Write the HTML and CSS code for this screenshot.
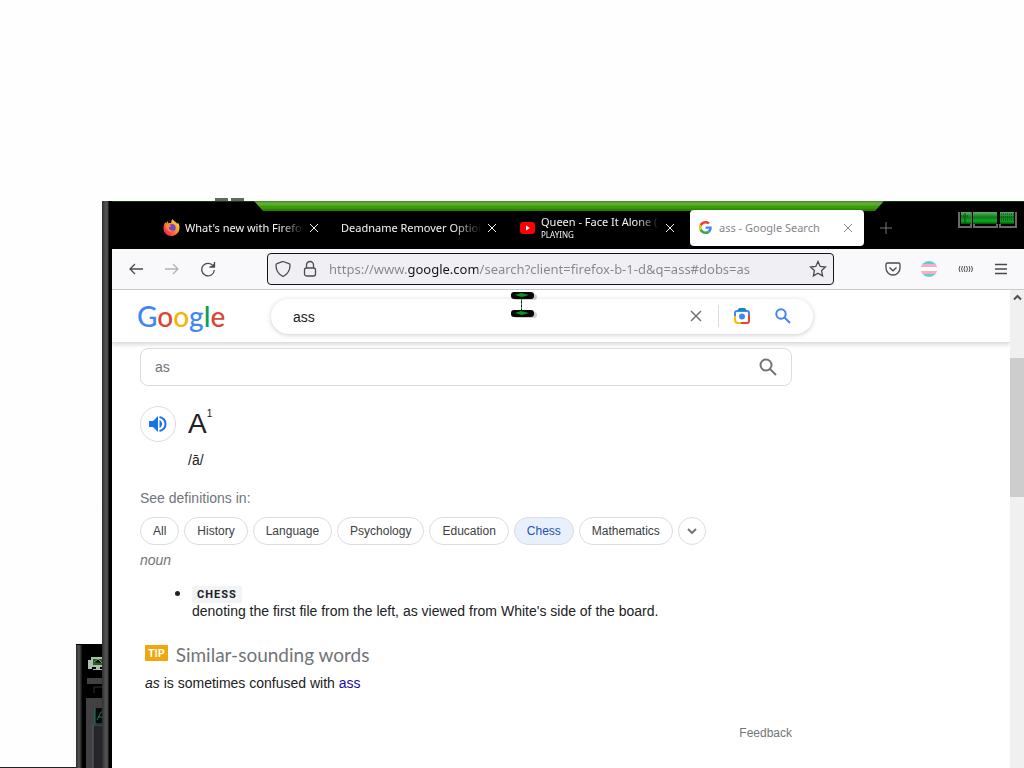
FILE: index.html
```html
<!DOCTYPE html>
<html lang="en">
<head>
<meta charset="utf-8">
<title>ass - Google Search</title>
<link rel="stylesheet" href="styles.css">
</head>
<body>
<div class="desktop">
  <div class="rear-window" aria-hidden="true">
    <svg width="26" height="125" viewBox="0 0 26 125">
      <defs><linearGradient id="edge"><stop offset="0" stop-color="#2c2c2c"/><stop offset=".5" stop-color="#555"/><stop offset="1" stop-color="#111"/></linearGradient></defs>
      <path fill="#000" d="M0 1h26v124H0z"/>
      <path fill="url(#edge)" d="M0 2h6v123H0z"/>
      <path fill="#a9bdb0" d="M12 17h4v9h-4zM15 14h11v10H15zM20 24h4v2h-4zM17 26h9v1h-9z"/>
      <path fill="#285c1b" d="M17 16h9v6h-9z"/><path stroke="#72a454" d="M18 19l4-3 4 4"/>
      <path fill="#414143" d="M11 35h15v6H11zM10 55h16v70H10z"/>
      <path stroke="#333" fill="none" d="M18 50v-6h8"/>
      <path fill="#060a09" d="M19 65h7v17h-7z"/><path stroke="#24745a" fill="none" d="M19 65v16h7M21 77l4-8h1M22 74h4"/>
      <path fill="#24262b" d="M17 83h9v42h-9z"/><path stroke="#606064" d="M17 82v43"/>
    </svg>
  </div>
  <div class="desk-line"></div>

  <section class="window">
    <div class="lugs"><i></i><i></i></div>
    <div class="titlebar">
      <div class="strip"></div>
      <div class="tabs">
        <div class="tab">
          <svg width="17" height="17" viewBox="0 0 17 17"><defs><linearGradient id="fox" x1="1" y1="0" x2="0" y2="1"><stop offset="0" stop-color="#fff044"/><stop offset=".45" stop-color="#ff9520"/><stop offset=".75" stop-color="#ff3b4d"/><stop offset="1" stop-color="#e3158d"/></linearGradient></defs><path fill="url(#fox)" d="M9.500 0c.5 2 4 3 5 5 .4-.8.2-1.500 0-2 2 2.300 2.400 5 1.800 7.500C15.500 14.500 12 17 8.500 17 4 17 .5 13.500.5 9c0-2.500 1-4.800 2-6l.7 1.500L4.500 2l.8 2.200c1-.3 2.200-.2 3 .1C8 3 8.500 1.200 9.500 0z"/><circle cx="9" cy="8.700" r="3.700" fill="#7643d5"/><path fill="#ff8a27" d="M3 6c2-1.500 4-.5 5 1.200L5.700 8.500C6 11 8.500 12 11 11c-3 3.500-8 1-8-5z"/></svg>
          <span class="tab-label">What's new with Firefox</span>
          <button class="close" aria-label="Close tab"><svg width="10" height="10" viewBox="0 0 10 10"><path d="M1 1l8 8M9 1L1 9"/></svg></button>
        </div>
        <div class="tab">
          <span class="tab-label">Deadname Remover Option</span>
          <button class="close" aria-label="Close tab"><svg width="10" height="10" viewBox="0 0 10 10"><path d="M1 1l8 8M9 1L1 9"/></svg></button>
        </div>
        <div class="tab">
          <svg width="17" height="12" viewBox="0 0 17 12"><rect x="1" width="15" height="12" rx="3" fill="#f00"/><path fill="#fff" d="M7 3.500v5l4-2.500z"/></svg>
          <span class="tab-label">Queen - Face It Alone (<small>PLAYING</small></span>
          <button class="close" aria-label="Close tab"><svg width="10" height="10" viewBox="0 0 10 10"><path d="M1 1l8 8M9 1L1 9"/></svg></button>
        </div>
        <div class="tab active">
          <svg width="13" height="13" viewBox="0 0 48 48"><path fill="#EA4335" d="M24 9.500c3.540 0 6.710 1.220 9.210 3.600l6.850-6.850C35.900 2.380 30.470 0 24 0 14.620 0 6.510 5.380 2.560 13.220l7.980 6.190C12.430 13.720 17.740 9.500 24 9.500z"/><path fill="#4285F4" d="M46.980 24.550c0-1.570-.15-3.090-.38-4.550H24v9.020h12.940c-.58 2.960-2.260 5.480-4.780 7.180l7.730 6c4.510-4.180 7.090-10.360 7.090-17.650z"/><path fill="#FBBC05" d="M10.530 28.590a14.500 14.500 0 010-9.180l-7.980-6.190a24 24 0 000 21.560z"/><path fill="#34A853" d="M24 48c6.480 0 11.930-2.130 15.890-5.810l-7.730-6c-2.150 1.450-4.920 2.300-8.160 2.300-6.260 0-11.570-4.220-13.470-9.910l-7.980 6.190C6.510 42.620 14.620 48 24 48z"/></svg>
          <span class="tab-label">ass - Google Search</span>
          <button class="close" aria-label="Close tab"><svg width="10" height="10" viewBox="0 0 10 10"><path d="M1 1l8 8M9 1L1 9"/></svg></button>
        </div>
      </div>
      <button class="new-tab" aria-label="New tab"><svg width="12" height="12" viewBox="0 0 12 12"><path d="M6 0v12M0 6h12"/></svg></button>
      <button class="controls" aria-label="Window controls">
        <svg width="60" height="17" viewBox="0 0 60 17">
          <defs><linearGradient id="led" x1="0" y1="0" x2="0" y2="1"><stop offset="0" stop-color="#62ad68"/><stop offset=".45" stop-color="#0a7c18"/><stop offset=".75" stop-color="#0cad1e"/><stop offset="1" stop-color="#064d0c"/></linearGradient></defs>
          <path fill="none" stroke="#696969" stroke-width="2" d="M1 0v15h12V0M16 12v3h23v-3M42 12v3h16V0"/>
          <path fill="url(#led)" d="M3 0h10v12H3zM15 0h24v12H15zM42 0h14v12H42z"/>
          <path stroke="#053b0a" stroke-dasharray="1 1" d="M3 4h8M43 2h13M43 5h13M43 8h13"/><path stroke="#084e0d" d="M7 1v10"/>
        </svg>
      </button>
    </div>

    <div class="toolbar">
      <button class="tool" aria-label="Back"><svg width="16" height="16" viewBox="0 0 16 16"><path d="M15 8H2M7 3L2 8l5 5"/></svg></button>
      <button class="tool dim" aria-label="Forward"><svg width="16" height="16" viewBox="0 0 16 16"><path d="M1 8h13M9 3l5 5-5 5"/></svg></button>
      <button class="tool" aria-label="Reload"><svg width="16" height="16" viewBox="0 0 16 16"><path d="M13.500 5.500A6.300 6.300 0 1014.300 9"/><path d="M14.500 1v5h-5"/><path fill="#4a4a50" stroke="none" d="M14.500 2v4h-4z"/></svg></button>
      <div class="urlbar">
        <svg width="16" height="18" viewBox="0 0 16 18"><path d="M8 1.500l6 2.200c.7.300 1 .8 1 1.500 0 5-2.500 9-7 11.300C3.500 14.200 1 10.200 1 5.200c0-.7.3-1.200 1-1.500z"/></svg>
        <svg width="14" height="18" viewBox="0 0 14 18"><rect x="1.500" y="8" width="11" height="8" rx="2"/><path d="M3.500 8V5a3.500 3.500 0 017 0v3"/></svg>
        <input class="url" type="text" aria-label="Address" value="https://www.google.com/search?client=firefox-b-1-d&amp;q=ass#dobs=as">
        <button class="star" aria-label="Bookmark"><svg width="18" height="18" viewBox="0 0 18 18"><path d="M9 1.500l2.200 4.900 5.300.6-3.900 3.600 1 5.300L9 13.300l-4.600 2.600 1-5.300L1.500 7l5.300-.6z"/></svg></button>
      </div>
      <button class="tool" aria-label="Pocket"><svg width="16" height="16" viewBox="0 0 16 16"><path d="M2.500 2h11C14.500 2 15 2.500 15 3.500V7A7 7 0 011 7V3.500C1 2.500 1.500 2 2.500 2zM4.500 6.500L8 9.800l3.500-3.300"/></svg></button>
      <button class="tool" aria-label="Deadname Remover"><svg class="flag" width="18" height="18" viewBox="0 0 18 18"><defs><clipPath id="round"><circle cx="9" cy="9" r="8"/></clipPath></defs><g clip-path="url(#round)"><path fill="#6cc8d2" d="M0 0h18v18H0z"/><path fill="#f3b0c0" d="M0 4h18v10H0z"/><path fill="#fff" d="M0 7h18v4H0z"/></g></svg></button>
      <button class="tool" aria-label="Sound alert"><svg class="echo" width="15" height="8" viewBox="0 0 15 8"><path d="M2 1Q0 4 2 7M4.500 1Q2.500 4 4.500 7M7 1Q5 4 7 7M8.500 1q2 3 0 6M11 1q2 3 0 6M13.500 1q2 3 0 6"/></svg></button>
      <button class="tool" aria-label="Menu"><svg width="12" height="12" viewBox="0 0 12 12"><path d="M0 1.500h12M0 6h12M0 10.500h12"/></svg></button>
    </div>

    <div class="viewport">
      <div class="page">
        <header class="search-head">
          <a class="logo" href="#" aria-label="Google"><span class="b">G</span><span class="r">o</span><span class="y">o</span><span class="b">g</span><span class="g">l</span><span class="r">e</span></a>
          <form class="searchbox">
            <input type="text" aria-label="Search" value="ass">
            <button type="button" class="clear" aria-label="Clear"><svg width="12" height="12" viewBox="0 0 12 12"><path d="M1 1l10 10M11 1L1 11"/></svg></button>
            <button type="button" class="lens" aria-label="Search by image"><svg width="18" height="18" viewBox="0 0 18 18"><g fill="none" stroke-width="2"><path stroke="#4285f4" d="M2 9V6q0-2 2-2h10q2 0 2 2v3"/><path stroke="#fbbc04" d="M2 9v4q0 3 3 3h3"/><path stroke="#ea4335" d="M8 16h6q2 0 2-2V8"/></g><path fill="#188bb4" d="M6 1h6l2 3H4z"/><circle cx="9" cy="9.500" r="3" fill="#4285f4"/></svg></button>
            <button type="submit" class="go" aria-label="Search"><svg width="16" height="16" viewBox="0 0 16 16"><circle cx="6" cy="6" r="4.700"/><path d="M9.500 9.500L15 15"/></svg></button>
          </form>
        </header>

        <main class="results">
          <form class="dictbox">
            <input type="text" aria-label="Search for a word" value="as">
            <button type="button" aria-label="Look up"><svg width="18" height="18" viewBox="0 0 18 18"><circle cx="7" cy="7" r="5.500"/><path d="M11 11l6 6"/></svg></button>
          </form>

          <div class="entry">
            <button class="audio" aria-label="Listen"><svg width="18" height="18" viewBox="0 0 18 18"><path fill="#1a73e8" d="M0 6h4l5-5v16l-5-5H0zM10.500 5c3.500 1.500 3.500 6.500 0 8z"/><path fill="none" stroke="#1a73e8" stroke-width="2" d="M10.500 2c8 2 8 12 0 14"/></svg></button>
            <h1>A<sup>1</sup></h1>
            <p class="phonetic">/ā/</p>
          </div>

          <p class="defs-in">See definitions in:</p>
          <div class="chips">
            <button>All</button><button>History</button><button>Language</button><button>Psychology</button><button>Education</button><button class="on">Chess</button><button>Mathematics</button>
            <button class="more" aria-label="More"><svg width="10" height="6" viewBox="0 0 10 6"><path d="M1 1l4 4 4-4"/></svg></button>
          </div>
          <p class="pos">noun</p>

          <ul class="senses">
            <li><span class="field">CHESS</span><div>denoting the first file from the left, as viewed from White's side of the board.</div></li>
          </ul>

          <section class="tip">
            <h2><span class="badge">TIP</span>Similar-sounding words</h2>
            <p><em>as</em> is sometimes confused with <a href="#">ass</a></p>
          </section>
          <a class="feedback" href="#">Feedback</a>
        </main>
      </div>
      <div class="scrollbar" aria-hidden="true">
        <svg width="14" height="16" viewBox="0 0 14 16"><path d="M4 9.500L7.500 6 11 9.500"/></svg>
        <div class="thumb"></div>
      </div>
    </div>
  </section>

  <svg class="cursor" width="28" height="30" viewBox="0 0 28 30" aria-hidden="true">
    <g fill="#888" opacity=".4"><rect x="4" y="4" width="23" height="6" rx="3"/><rect x="4" y="22" width="23" height="6" rx="3"/></g>
    <path stroke="#111" stroke-width="1" d="M11.500 5v19"/><path stroke="#1d9a31" stroke-dasharray="2 2" d="M11.500 5v19"/>
    <rect x="1" y="2" width="23" height="7" rx="3" fill="#070b07"/><rect x="1" y="20" width="23" height="7" rx="3" fill="#070b07"/>
    <path fill="#168d27" d="M5 5l6-2 8 2-7 2zM5 23l6-2 8 2-7 2z"/>
  </svg>
</div>
</body>
</html>
```
FILE: styles.css
```css
* { box-sizing: border-box; }
body { margin: 0; background: #fefefe; font: 14px/20px "Liberation Sans", Arial, sans-serif; color: #202124; }
button { padding: 0; border: 0; background: none; color: inherit; font: inherit; display: flex; align-items: center; justify-content: center; }
input { border: 0; background: none; outline: 0; padding: 0; min-width: 0; font: inherit; color: inherit; }
a { text-decoration: none; }
p, h1, h2, ul { margin: 0; padding: 0; font-weight: 400; }
svg { display: block; flex: none; }

.desktop { position: relative; min-height: 100vh; overflow: hidden; }
.rear-window { position: absolute; left: 76px; top: 643px; }
.desk-line { position: absolute; left: 0; bottom: 0; width: 76px; height: 1px; background: #222; }
.cursor { position: absolute; left: 510px; top: 290px; }

.window { position: absolute; left: 102px; top: 201px; right: 0; bottom: 0; display: flex; flex-direction: column; padding-left: 10px; background: linear-gradient(90deg, #2e2e2e 0, #555 4px, #444 6px, #000 7px, #000 10px, #fff 10px); }
.lugs { position: absolute; left: 113px; top: -3px; display: flex; gap: 3px; }
.lugs i { width: 13px; height: 3px; background: #666; }

.titlebar { position: relative; flex: none; height: 48px; display: flex; align-items: center; padding: 4px 6px 0 44px; background: #000; border-top: 1px solid #123607; font: 11px/14px "Noto Sans", sans-serif; color: #f4f4f4; }
.strip { position: absolute; left: 142px; right: 140px; top: -1px; height: 10px; background: linear-gradient(#3f861f 0, #65a63f 2px, #65a63f 4px, #35a000 5px, #31a000 7px, #286e0c 10px); clip-path: polygon(0 0, 100% 0, calc(100% - 9px) 100%, 9px 100%); }
.tabs { position: relative; display: flex; gap: 4px; }
.tab { width: 174px; height: 36px; display: flex; align-items: center; padding: 0 6px 0 7px; border-radius: 4px; }
.tab > svg { margin-right: 5px; }
.tab-label { flex: 1; min-width: 0; overflow: hidden; white-space: nowrap; mask-image: linear-gradient(90deg, #000 80%, transparent); }
.tab-label small { display: block; font-size: 8px; line-height: 12px; }
.tab .close { width: 20px; height: 20px; }
.close svg, .new-tab svg { fill: none; stroke: currentColor; stroke-width: 1; }
.tab.active { background: #fff; color: #85858a; padding-left: 9px; }
.tab.active > svg { margin-right: 7px; }
.tab.active .tab-label { mask-image: none; }
.new-tab { width: 32px; height: 32px; margin-left: 6px; color: #777; }
.controls { margin-left: auto; margin-bottom: 14px; }

.toolbar { flex: none; height: 41px; display: flex; align-items: center; padding: 0 5px 0 6px; background: #f9f9fb; border-bottom: 1px solid #ccc; }
.toolbar svg { fill: none; stroke: #4a4a50; stroke-width: 1.3; }
.toolbar .flag { stroke: none; }
.toolbar .echo { stroke: #555; stroke-width: 1; }
.tool { width: 36px; height: 32px; }
.tool.dim { opacity: .4; }
.urlbar { flex: 1; height: 32px; display: flex; align-items: center; gap: 12px; margin: 0 41px; padding: 0 6px 0 7px; border: 1px solid #15141a; border-radius: 4px; background: #f0f0f4; }
.urlbar .url { flex: 1; height: 24px; font: 13px/24px "Noto Sans", sans-serif; color: transparent; background: linear-gradient(90deg, #85858c 78px, #15141a 78px, #15141a 149px, #85858c 149px); -webkit-background-clip: text; background-clip: text; }

.viewport { flex: 1; min-height: 0; display: flex; background: #fff; }
.page { flex: 1; min-width: 0; }
.search-head { height: 53px; display: flex; align-items: center; padding-left: 25px; border-bottom: 1px solid #ddd; box-shadow: 0 2px 4px #0002; }
.logo { width: 134px; font: 500 28px/36px Lato, sans-serif; }
.b { color: #4285f4; } .r { color: #db4437; } .y { color: #f4b400; } .g { color: #0f9d58; }
.searchbox { flex: 0 1 542px; height: 35px; display: flex; align-items: center; padding: 0 12px 0 22px; border-radius: 18px; box-shadow: 0 1px 5px #0003; }
.searchbox input { flex: 1; height: 30px; padding-top: 1px; }
.searchbox svg, .dictbox svg { fill: none; stroke-width: 2; }
.clear { width: 46px; height: 22px; border-right: 1px solid #dadce0; }
.clear svg { stroke: #70757a; stroke-width: 1.5; }
.lens { width: 46px; }
.go { width: 36px; }
.go svg { stroke: #4285f4; }

.results { max-width: 680px; padding: 5px 0 0 28px; display: flex; flex-direction: column; }
.dictbox { height: 38px; display: flex; align-items: center; padding: 0 14px; border: 1px solid #dadce0; border-radius: 8px; }
.dictbox input { flex: 1; color: #70757a; }
.dictbox svg { stroke: #70757a; }
.entry { display: grid; grid-template-columns: 36px 1fr; column-gap: 12px; align-items: center; margin-top: 20px; }
.audio { width: 36px; height: 36px; border: 1px solid #dadce0; border-radius: 50%; }
.entry h1 { display: flex; font-size: 28px; line-height: 32px; }
.entry sup { font-size: 10px; line-height: 12px; }
.phonetic { grid-column: 2; margin-top: 8px; }
.defs-in { margin-top: 18px; color: #70757a; }
.chips { display: flex; gap: 5px; margin-top: 9px; }
.chips button { height: 28px; padding: 0 12px; border: 1px solid #dadce0; border-radius: 14px; font-size: 12px; color: #3c4043; }
.chips .on { background: #e8f0fe; color: #1d50b0; }
.chips .more { width: 28px; padding: 0; }
.chips svg { fill: none; stroke: #70757a; stroke-width: 2; }
.pos { margin-top: 5px; font-style: italic; color: #70757a; }
.senses { margin-top: 14px; padding-left: 52px; line-height: 16px; }
.senses li::marker { font-size: 18px; }
.field { padding: 2px 5px; border-radius: 2px; background: #f1f3f4; font: 700 11px/16px Roboto, sans-serif; letter-spacing: 1px; }
.tip { margin-top: 26px; padding-left: 5px; }
.tip h2 { display: flex; gap: 8px; align-items: flex-start; font: 19px/20px Lato, sans-serif; color: #70757a; }
.badge { padding: 0 3px; background: #f2a60d; color: #fff; font: 700 11px/16px Lato, sans-serif; border-radius: 1px; }
.tip p { margin-top: 8px; }
.tip a { color: #1a0dab; }
.feedback { align-self: flex-end; margin-top: 30px; font-size: 12px; color: #70757a; }

.scrollbar { flex: none; width: 14px; background: #f0f0f0; }
.scrollbar svg { fill: none; stroke: #505050; stroke-width: 2; }
.thumb { margin-top: 52px; height: 139px; background: #cdcdcd; }
```
